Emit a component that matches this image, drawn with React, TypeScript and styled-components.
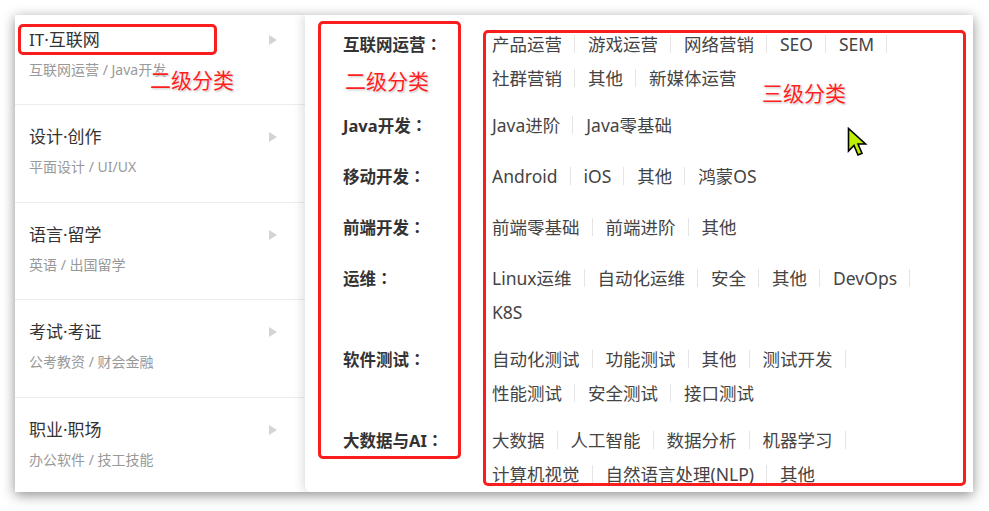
import React from "react";
import styled, { createGlobalStyle } from "styled-components";

const GlobalStyle = createGlobalStyle`
  html, body { margin: 0; padding: 0; background: #ffffff; }
  body { font-family: "Noto Sans", "Noto Sans CJK SC", sans-serif; }
  #root { width: 989px; height: 511px; overflow: hidden; }
`;

const Frame = styled.div`
  position: relative;
  margin: 15px;
  width: 958px;
  height: 477px;
  display: flex;
  background: #fff;
  box-shadow: 0 3px 12px rgba(0, 0, 0, 0.45);
  overflow: hidden;
`;

const Sidebar = styled.ul`
  list-style: none;
  margin: 0;
  padding: 0;
  width: 290px;
  flex: none;
  background: #fff;
`;

const SideItem = styled.li<{ $first?: boolean }>`
  padding: ${(p) => (p.$first ? "12px" : "19px")} 28px 22px 14px;
  border-top: ${(p) => (p.$first ? "none" : "1px solid #ececec")};
  height: ${(p) => (p.$first ? "89px" : "97.7px")};
  box-sizing: border-box;
`;

const SideTitleRow = styled.div`
  display: flex;
  align-items: center;
  justify-content: space-between;
  height: 26px;
`;

const SideTitle = styled.span`
  font-size: 17px;
  color: #333;
  line-height: 26px;
`;

const Caret = styled.span`
  width: 0;
  height: 0;
  border-left: 8px solid #d4d4d4;
  border-top: 5px solid transparent;
  border-bottom: 5px solid transparent;
`;

const SideSub = styled.div`
  margin-top: 7px;
  font-size: 14px;
  line-height: 20px;
  color: #999;
  white-space: nowrap;
`;

const Panel = styled.div`
  flex: 1;
  position: relative;
  padding: 12px 0 0 38px;
  background: #fff;
  border-bottom-left-radius: 6px;
  box-shadow: -3px 0 10px rgba(0, 0, 0, 0.12);
`;

const Group = styled.div`
  display: flex;
  align-items: flex-start;
  margin-bottom: 13px;
`;

const GroupLabel = styled.div`
  width: 149px;
  flex: none;
  font-size: 16.5px;
  font-weight: 700;
  color: #333;
  line-height: 34px;
  padding-bottom: 3px;
  white-space: nowrap;
`;

const Colon = styled.span`
  font-family: "Noto Sans CJK TC", sans-serif;
`;

const ItemList = styled.div`
  width: 440px;
  display: flex;
  flex-wrap: wrap;
`;

const Item = styled.span<{ $last?: boolean }>`
  display: inline-block;
  font-size: 17.5px;
  line-height: 18px;
  height: 18px;
  margin: 8px 13px 8px 0;
  padding-right: ${(p) => (p.$last ? "0" : "12px")};
  border-right: ${(p) => (p.$last ? "none" : "1px solid #e4e4e4")};
  color: #444;
  white-space: nowrap;
`;

const MarkBox = styled.div<{ $l: number; $t: number; $w: number; $h: number }>`
  position: absolute;
  left: ${(p) => p.$l}px;
  top: ${(p) => p.$t}px;
  width: ${(p) => p.$w}px;
  height: ${(p) => p.$h}px;
  box-sizing: border-box;
  border: 3px solid #fa1d1d;
  border-radius: 5px;
  pointer-events: none;
`;

const MarkText = styled.div<{ $l: number; $t: number }>`
  position: absolute;
  left: ${(p) => p.$l}px;
  top: ${(p) => p.$t}px;
  font-family: "Noto Sans CJK SC", sans-serif;
  font-size: 21px;
  font-weight: 400;
  line-height: 24px;
  color: #ff1f1f;
  text-shadow: 0 0 2px #fff, 0 0 2px #fff, 1px 1px 2px rgba(0, 0, 0, 0.35);
  white-space: nowrap;
`;

const Cursor = styled.svg`
  position: absolute;
  left: 832px;
  top: 112px;
`;

const sideData = [
  { title: "IT·互联网", sub: "互联网运营 / Java开发" },
  { title: "设计·创作", sub: "平面设计 / UI/UX" },
  { title: "语言·留学", sub: "英语 / 出国留学" },
  { title: "考试·考证", sub: "公考教资 / 财会金融" },
  { title: "职业·职场", sub: "办公软件 / 技工技能" },
];

const groups = [
  { label: "互联网运营", items: ["产品运营", "游戏运营", "网络营销", "SEO", "SEM", "社群营销", "其他", "新媒体运营"] },
  { label: "Java开发", items: ["Java进阶", "Java零基础"] },
  { label: "移动开发", items: ["Android", "iOS", "其他", "鸿蒙OS"] },
  { label: "前端开发", items: ["前端零基础", "前端进阶", "其他"] },
  { label: "运维", items: ["Linux运维", "自动化运维", "安全", "其他", "DevOps", "K8S"] },
  { label: "软件测试", items: ["自动化测试", "功能测试", "其他", "测试开发", "性能测试", "安全测试", "接口测试"] },
  { label: "大数据与AI", items: ["大数据", "人工智能", "数据分析", "机器学习", "计算机视觉", "自然语言处理(NLP)", "其他"] },
];

export default function App() {
  return (
    <>
      <GlobalStyle />
      <Frame>
        <Sidebar>
          {sideData.map((s, i) => (
            <SideItem key={s.title} $first={i === 0}>
              <SideTitleRow>
                <SideTitle>{s.title}</SideTitle>
                <Caret />
              </SideTitleRow>
              <SideSub>{s.sub}</SideSub>
            </SideItem>
          ))}
        </Sidebar>
        <Panel>
          {groups.map((g) => (
            <Group key={g.label}>
              <GroupLabel>
                {g.label}
                <Colon>：</Colon>
              </GroupLabel>
              <ItemList>
                {g.items.map((it, i) => (
                  <Item key={it + i} $last={i === g.items.length - 1}>
                    {it}
                  </Item>
                ))}
              </ItemList>
            </Group>
          ))}
        </Panel>

        <MarkBox $l={3} $t={9} $w={199} $h={31} />
        <MarkBox $l={303} $t={6} $w={143} $h={438} />
        <MarkBox $l={468} $t={15} $w={483} $h={456} />
        <MarkText $l={135} $t={52}>二级分类</MarkText>
        <MarkText $l={330} $t={53}>二级分类</MarkText>
        <MarkText $l={747} $t={65}>三级分类</MarkText>
        <Cursor width="22" height="32" viewBox="0 0 22 32">
          <path
            d="M1.5 1.5 L1.5 24 L7 18.5 L11 28 L15 26.3 L11 17 L18.5 17 Z"
            fill="#bdf000"
            stroke="#000"
            strokeWidth="1.6"
            strokeLinejoin="miter"
          />
        </Cursor>
      </Frame>
    </>
  );
}
